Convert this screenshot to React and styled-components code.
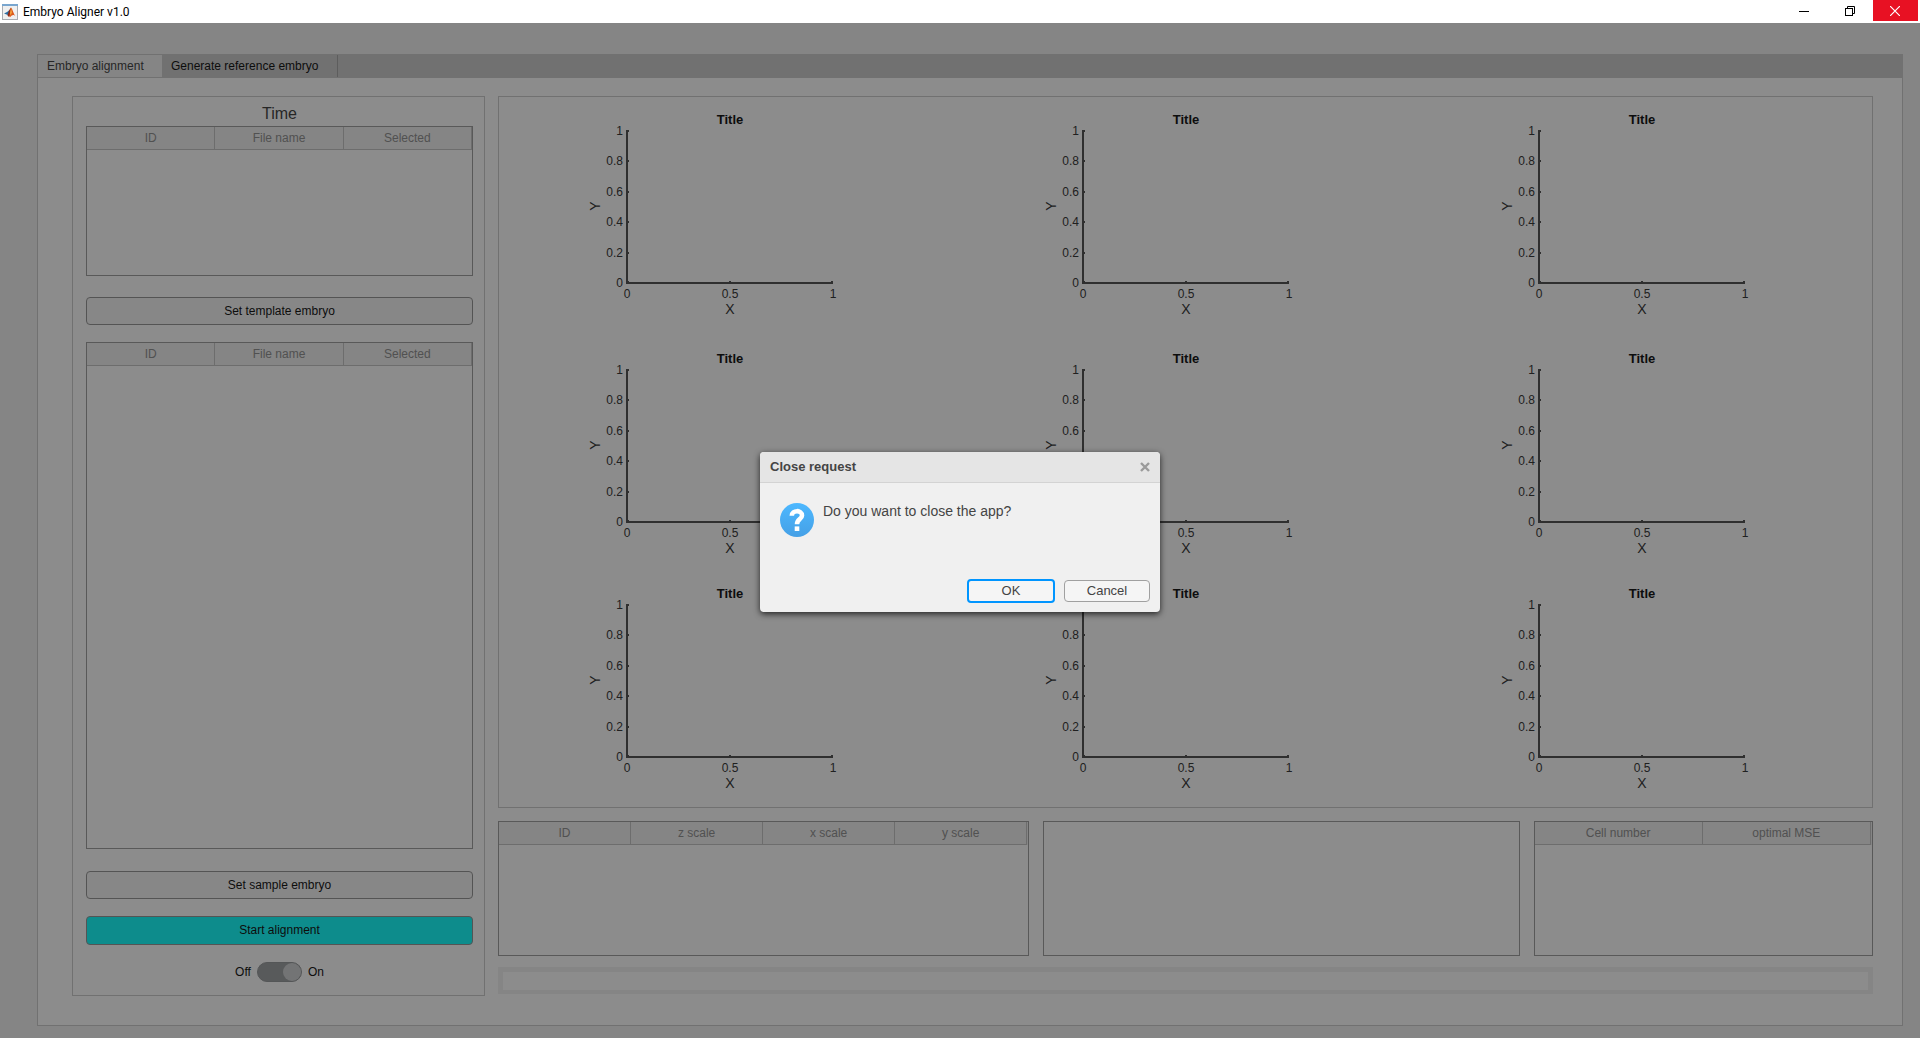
import React, { useState } from "react";
import styled, { createGlobalStyle } from "styled-components";

const Global = createGlobalStyle`
  *, *::before, *::after { box-sizing: border-box; }
  body { margin: 0; font-family: "Liberation Sans", Arial, sans-serif; font-size: 12px; color: #000; }
  button, input { font: inherit; color: inherit; }
`;

const Window = styled.div`
  display: flex;
  flex-direction: column;
  min-height: 100vh;
`;

const TitleBar = styled.header`
  display: flex;
  align-items: stretch;
  height: 23px;
  background: #fff;
  padding: 0 2px;
`;

const WindowTitle = styled.h1`
  display: flex;
  align-items: center;
  gap: 5px;
  margin: 0 auto 0 0;
  font: 400 12px/22px Roboto, "Noto Sans", sans-serif;
`;

const WindowButton = styled.button`
  width: ${(p) => (p.$close ? "45px" : "46px")};
  height: 21px;
  padding: ${(p) => (p.$close ? "0 1px 0 0" : "0")};
  border: 0;
  display: grid;
  place-items: center;
  background: ${(p) => (p.$close ? "#e81123" : "transparent")};
  color: ${(p) => (p.$close ? "#fff" : "#000")};
`;

const Workspace = styled.main`
  position: relative;
  flex: 1;
  display: flex;
  flex-direction: column;
  padding: 31px 17px 12px 37px;
  background: #f0f0f0;
`;

const TabStrip = styled.div`
  display: flex;
  height: 24px;
  border: 1px solid #c8c8c8;
  background: #c8c8c8;
`;

const Tab = styled.button`
  width: ${(p) => p.$width};
  padding: 0 0 0 9px;
  border: 0;
  border-right: 1px solid ${(p) => (p.$active ? "#f0f0f0" : "#a0a0a0")};
  text-align: left;
  line-height: 20px;
  background: ${(p) => (p.$active ? "#f0f0f0" : "transparent")};
  color: ${(p) => (p.$active ? "#333" : "#000")};
`;

const TabPage = styled.div`
  flex: 1;
  display: grid;
  grid-template-columns: 413fr 1375fr;
  column-gap: 13px;
  padding: 18px 29px 29px 34px;
  background: #fff;
  border: 1px solid #c8c8c8;
  border-top: 0;
`;

const ControlPanel = styled.section`
  display: flex;
  flex-direction: column;
  padding: 7px 11px 13px 13px;
  border: 1px solid #c8c8c8;
`;

const PanelHeading = styled.h2`
  margin: 0 0 2px;
  font-weight: 400;
  font-size: 16px;
  line-height: 20px;
  text-align: center;
  color: #333;
`;

const TableFrame = styled.div`
  flex: ${(p) => (p.$grow ? "1" : "none")};
  height: ${(p) => p.$height || "auto"};
  border: 1px solid #999;
`;

const Table = styled.table`
  width: 100%;
  table-layout: fixed;
  border-collapse: separate;
  border-spacing: 0;
  padding-right: ${(p) => (p.$gutter ? "1px" : "0")};
  background: linear-gradient(#f0f0f0, #f0f0f0) 0 0 / 100% 23px no-repeat;

  th {
    height: 23px;
    padding: 0;
    border-right: 1px solid #c0c0c0;
    border-bottom: 1px solid #c0c0c0;
    font-weight: 400;
    line-height: 22px;
    color: #888;
  }
`;

const PushButton = styled.button`
  height: ${(p) => (p.$accent ? "29px" : "28px")};
  margin: ${(p) => p.$margin};
  padding: 0 0 1px;
  border: 1px solid #8f8f8f;
  border-radius: 4px;
  background: ${(p) => (p.$accent ? "#00ffff" : "#f5f5f5")};
`;

const SwitchRow = styled.label`
  display: flex;
  justify-content: center;
  align-items: center;
  gap: 6px;
  height: 20px;
`;

const SwitchInput = styled.input`
  appearance: none;
  width: 45px;
  height: 20px;
  margin: 0;
  border-radius: 10px;
  background: #979a9c;
  border: 1px solid #8f9294;
  display: flex;
  justify-content: ${(p) => (p.checked ? "flex-end" : "flex-start")};

  &::before {
    content: "";
    width: 18px;
    height: 18px;
    border-radius: 50%;
    background: #cdcfd1;
  }
`;

const Results = styled.div`
  display: grid;
  grid-template-rows: 1fr 135px 38px;
  padding-bottom: 2px;
`;

const AxesPanel = styled.section`
  display: grid;
  grid-template-columns: repeat(3, 1fr);
  grid-template-rows: 239px 235px 1fr;
  justify-items: center;
  padding: 13px 2px 0 3px;
  margin-bottom: 13px;
  border: 1px solid #c8c8c8;
`;

const Chart = styled.svg`
  width: 300px;
  height: 216px;
  font-size: 12px;
  fill: #262626;

  .axis { stroke: #444; stroke-width: 2; fill: none; shape-rendering: crispEdges; }
  .title { font-weight: 700; font-size: 13px; fill: #000; }
  .label { font-size: 14px; }
`;

const Tables = styled.div`
  display: grid;
  grid-template-columns: 532fr 477fr 340fr;
  gap: 14px;
`;

const ProgressTrack = styled.div`
  margin-top: 11px;
  height: 27px;
  border: 5px solid #f0f0f0;
  border-bottom-width: 4px;
  background: #fff;
`;

const Backdrop = styled.div`
  position: absolute;
  inset: 0;
  display: grid;
  place-items: center;
  padding-top: 3px;
  background: rgba(26, 26, 26, 0.5);
`;

const Dialog = styled.section`
  display: flex;
  flex-direction: column;
  width: 400px;
  min-height: 160px;
  border-radius: 4px;
  overflow: hidden;
  background: #f0f0f0;
  color: #444;
  box-shadow: 0 2px 6px rgba(0, 0, 0, 0.75);
`;

const DialogHeader = styled.header`
  display: flex;
  align-items: center;
  justify-content: space-between;
  height: 31px;
  padding: 0 10px;
  background: #e5e5e5;
  border-bottom: 1px solid #d3d3d3;
`;

const DialogTitle = styled.h2`
  margin: 0;
  font-size: 13px;
  line-height: 30px;
`;

const CloseButton = styled.button`
  display: grid;
  padding: 0;
  border: 0;
  background: none;
  color: #9b9b9b;
`;

const DialogBody = styled.div`
  flex: 1;
  display: flex;
  gap: 9px;
  padding: 20px 20px 0;
  font-size: 14px;
`;

const Message = styled.p`
  margin: 0;
  line-height: 16px;
`;

const DialogActions = styled.footer`
  display: flex;
  justify-content: flex-end;
  align-items: center;
  gap: 9px;
  padding: 0 10px 9px;
`;

const DialogButton = styled.button`
  width: ${(p) => (p.$primary ? "88px" : "86px")};
  height: ${(p) => (p.$primary ? "24px" : "22px")};
  padding: 0 0 1px;
  border: ${(p) => (p.$primary ? "2px solid #0095ff" : "1px solid #a0a0a0")};
  border-radius: 4px;
  background: #f5f5f5;
  font-size: 13px;
  line-height: 18px;
`;

function AppIcon() {
  return (
    <svg width="16" height="16" viewBox="0 0 16 16" aria-hidden="true">
      <rect x="0.5" y="0.5" width="15" height="15" fill="#f0f0f0" stroke="#a9adb2" />
      <rect x="0" y="0" width="16" height="2" fill="#79a6cf" />
      <path d="M2 9.5 L5 8 L7 6.5 L8 8 L6 11 L4.5 10.5 Z" fill="#2d6ea3" />
      <path d="M7 6.5 L9 3.5 L9.5 9 L7 13 L5.5 11.5 Z" fill="#8f2a17" />
      <path d="M9 3.5 C10.5 5 11.5 9.5 13.5 12.5 C11.5 10.5 10.5 10.5 8 13.2 C7 13 8 8 9 3.5 Z" fill="#dd5a1c" />
      <path d="M9 4 L10 8.5 L8.5 11.5 L8 9 Z" fill="#f3a13c" />
    </svg>
  );
}

function QuestionIcon() {
  return (
    <svg width="34" height="34" viewBox="0 0 34 34" aria-hidden="true">
      <defs>
        <linearGradient id="question-fill" x1="0" y1="0" x2="0" y2="1">
          <stop offset="0" stopColor="#4db8ff" />
          <stop offset="1" stopColor="#45a0e6" />
        </linearGradient>
      </defs>
      <circle cx="17" cy="17" r="17" fill="url(#question-fill)" />
      <path d="M11.8 12.8 C12 6.6 22 6.8 22 12.4 C22 16.2 17 16 17 21.2" fill="none" stroke="#fff" strokeWidth="4.6" />
      <rect x="14.7" y="23.4" width="4.6" height="4.6" fill="#fff" />
    </svg>
  );
}

const yTicks = ["1", "0.8", "0.6", "0.4", "0.2", "0"];
const xTicks = ["0", "0.5", "1"];

function Axes() {
  return (
    <Chart viewBox="0 0 300 216" role="img" aria-label="Empty axes">
      <text className="title" x="150" y="14" textAnchor="middle">Title</text>
      <path className="axis" d="M47 20 V173 H253" />
      {yTicks.map((t, i) => (
        <g key={t}>
          <path className="axis" d={`M48 ${21 + Math.round(i * 30.4)} h1`} />
          <text x="43" y={25 + Math.round(i * 30.4)} textAnchor="end">{t}</text>
        </g>
      ))}
      {xTicks.map((t, i) => (
        <g key={t}>
          <path className="axis" d={`M${48 + i * 102} 172 v-1`} />
          <text x={47 + i * 103} y="188" textAnchor="middle">{t}</text>
        </g>
      ))}
      <text className="label" x="150" y="204" textAnchor="middle">X</text>
      <text className="label" transform="translate(20 96) rotate(-90)" textAnchor="middle">Y</text>
    </Chart>
  );
}

function DataTable({ columns, grow, height, gutter }) {
  return (
    <TableFrame $grow={grow} $height={height}>
      {columns.length > 0 && (
        <Table $gutter={gutter}>
          <thead>
            <tr>{columns.map((c) => <th key={c} scope="col">{c}</th>)}</tr>
          </thead>
        </Table>
      )}
    </TableFrame>
  );
}

export default function App() {
  const [on, setOn] = useState(true);
  return (
    <Window>
      <Global />
      <TitleBar>
        <WindowTitle><AppIcon />Embryo Aligner v1.0</WindowTitle>
        <WindowButton aria-label="Minimize">
          <svg width="10" height="10" viewBox="0 0 10 10"><path d="M0 5.5 H10" stroke="currentColor" /></svg>
        </WindowButton>
        <WindowButton aria-label="Restore">
          <svg width="10" height="10" viewBox="0 0 10 10" fill="none" stroke="currentColor">
            <rect x="0.5" y="2.5" width="7" height="7" /><path d="M2.5 2.5 V0.5 H9.5 V7.5 H7.5" />
          </svg>
        </WindowButton>
        <WindowButton $close aria-label="Close">
          <svg width="10" height="10" viewBox="0 0 10 10"><path d="M0 0 L10 10 M10 0 L0 10" stroke="currentColor" strokeWidth="1.2" /></svg>
        </WindowButton>
      </TitleBar>
      <Workspace>
        <TabStrip role="tablist">
          <Tab role="tab" aria-selected="true" $active $width="124px">Embryo alignment</Tab>
          <Tab role="tab" aria-selected="false" $width="176px">Generate reference embryo</Tab>
        </TabStrip>
        <TabPage>
          <ControlPanel>
            <PanelHeading>Time</PanelHeading>
            <DataTable columns={["ID", "File name", "Selected"]} height="150px" />
            <PushButton $margin="21px 0 17px">Set template embryo</PushButton>
            <DataTable columns={["ID", "File name", "Selected"]} grow />
            <PushButton $margin="22px 0 17px">Set sample embryo</PushButton>
            <PushButton $accent $margin="0 0 17px">Start alignment</PushButton>
            <SwitchRow>
              <span>Off</span>
              <SwitchInput type="checkbox" role="switch" checked={on} onChange={(e) => setOn(e.target.checked)} />
              <span>On</span>
            </SwitchRow>
          </ControlPanel>
          <Results>
            <AxesPanel>
              {Array.from({ length: 9 }, (_, i) => <Axes key={i} />)}
            </AxesPanel>
            <Tables>
              <DataTable gutter columns={["ID", "z scale", "x scale", "y scale"]} />
              <DataTable columns={[]} />
              <DataTable gutter columns={["Cell number", "optimal MSE"]} />
            </Tables>
            <ProgressTrack />
          </Results>
        </TabPage>
        <Backdrop>
          <Dialog role="dialog" aria-modal="true" aria-labelledby="dialog-title">
            <DialogHeader>
              <DialogTitle id="dialog-title">Close request</DialogTitle>
              <CloseButton aria-label="Close dialog">
                <svg width="10" height="10" viewBox="0 0 10 10"><path d="M1 1 L9 9 M9 1 L1 9" stroke="currentColor" strokeWidth="2.4" /></svg>
              </CloseButton>
            </DialogHeader>
            <DialogBody>
              <QuestionIcon />
              <Message>Do you want to close the app?</Message>
            </DialogBody>
            <DialogActions>
              <DialogButton $primary>OK</DialogButton>
              <DialogButton>Cancel</DialogButton>
            </DialogActions>
          </Dialog>
        </Backdrop>
      </Workspace>
    </Window>
  );
}
